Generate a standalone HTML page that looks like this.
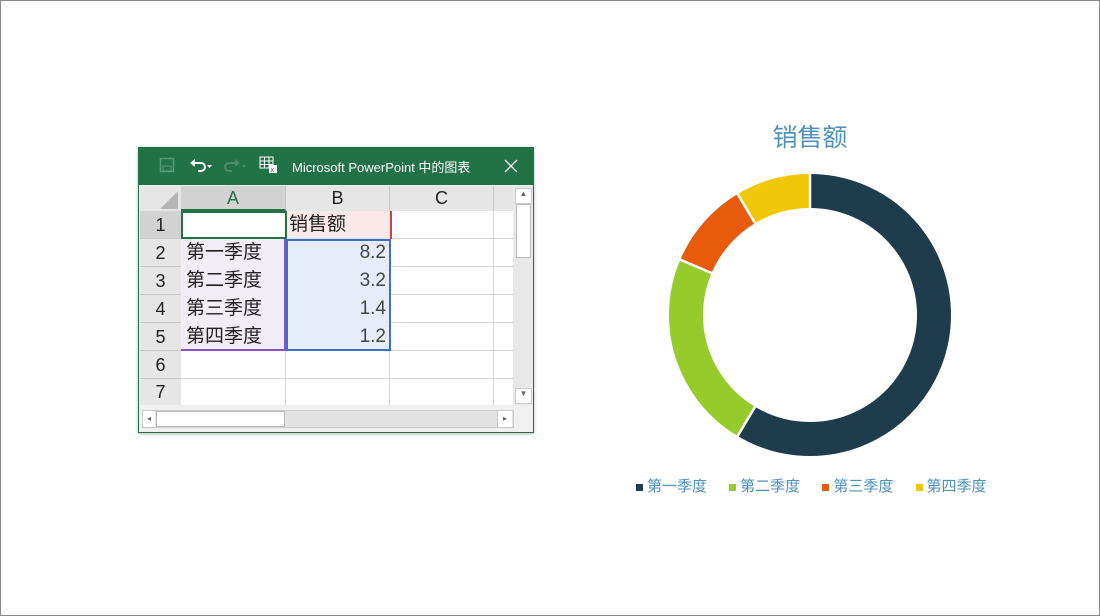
<!DOCTYPE html>
<html><head><meta charset="utf-8"><style>
body{margin:0;width:1100px;height:616px;background:#fff;position:relative;overflow:hidden;font-family:"Liberation Sans","Noto Sans CJK SC",sans-serif}
.frame{position:absolute;left:0;top:0;width:1098px;height:614px;border:1px solid #888}
.win{position:absolute;left:138px;top:147px;width:394px;height:284px;border:1px solid #217346;background:#f0f0f0;box-shadow:0 1px 3px rgba(0,0,0,.3)}
.tb{position:absolute;left:0;top:0;width:394px;height:37px;background:#217346;color:#fff}
.a{position:absolute}
.c{position:absolute;box-sizing:border-box;font-size:19px;color:#222;line-height:27px;white-space:nowrap}
.hd{background:#e6e6e6;text-align:center;color:#222;font-size:18px}
</style></head><body>
<div class="frame"></div>
<div class="win">
 <div class="tb">
  <svg class="a" style="left:20px;top:9px" width="16" height="16"><rect x="1.5" y="1.5" width="13" height="13" fill="none" stroke="#5a9a76" stroke-width="1.5"/><rect x="4" y="9" width="8" height="5" fill="none" stroke="#5a9a76"/></svg>
  <svg class="a" style="left:50px;top:8px" width="24" height="18"><path d="M4 7h8a4 4 0 0 1 0 8h-3" fill="none" stroke="#fff" stroke-width="2"/><path d="M1 7l5-4v8z" fill="#fff"/><path d="M18 9h5l-2.5 3z" fill="#fff"/></svg>
  <svg class="a" style="left:84px;top:8px" width="24" height="18"><path d="M14 7H6a4 4 0 0 0 0 8h3" fill="none" stroke="#4d8c69" stroke-width="2"/><path d="M17 7l-5-4v8z" fill="#4d8c69"/><path d="M19 9h4l-2 3z" fill="#4d8c69"/></svg>
  <svg class="a" style="left:120px;top:7px" width="20" height="20"><rect x="1" y="2" width="13" height="11" fill="none" stroke="#fff"/><path d="M1 6h13M1 9.5h13M5.5 2v11M10 2v11" stroke="#fff"/><rect x="10" y="10" width="8" height="8" fill="#fff"/><text x="11.5" y="17" font-size="7" fill="#217346">x</text></svg>
  <div class="a" style="left:153px;top:9px;font-size:13px;">Microsoft PowerPoint 中的图表</div>
  <svg class="a" style="left:365px;top:11px" width="14" height="14"><path d="M1 1L13 13M13 1L1 13" stroke="#fff" stroke-width="1.3"/></svg>
 </div>
 <div class="c hd" style="left:1px;top:38px;width:41px;height:25px;background:#e6e6e6"></div>
 <svg class="a" style="left:20px;top:42px" width="20" height="20"><path d="M19 1V19H1z" fill="#b5b5b5"/></svg>
 <div class="c hd" style="left:42px;top:38px;width:105px;height:25px;line-height:25px;background:#d2d2d2;color:#217346;border-bottom:2px solid #217346;border-right:1px solid #c8c8c8">A</div>
 <div class="c hd" style="left:147px;top:38px;width:104px;height:25px;line-height:25px;border-right:1px solid #c8c8c8">B</div>
 <div class="c hd" style="left:251px;top:38px;width:104px;height:25px;line-height:25px;border-right:1px solid #c8c8c8">C</div>
 <div class="c hd" style="left:355px;top:38px;width:19px;height:25px"></div>
 <div class="c hd" style="left:1px;top:63px;width:41px;height:28px;line-height:28px;background:#d2d2d2;border-bottom:1px solid #c8c8c8">1</div>
 <div class="c hd" style="left:1px;top:91px;width:41px;height:28px;line-height:28px;border-bottom:1px solid #c8c8c8">2</div>
 <div class="c hd" style="left:1px;top:119px;width:41px;height:28px;line-height:28px;border-bottom:1px solid #c8c8c8">3</div>
 <div class="c hd" style="left:1px;top:147px;width:41px;height:28px;line-height:28px;border-bottom:1px solid #c8c8c8">4</div>
 <div class="c hd" style="left:1px;top:175px;width:41px;height:28px;line-height:28px;border-bottom:1px solid #c8c8c8">5</div>
 <div class="c hd" style="left:1px;top:203px;width:41px;height:28px;line-height:28px;border-bottom:1px solid #c8c8c8">6</div>
 <div class="c hd" style="left:1px;top:231px;width:41px;height:26px;line-height:26px">7</div>
 <div class="a" style="left:42px;top:63px;width:332px;height:194px;background:#fff;
  background-image:linear-gradient(#d4d4d4,#d4d4d4),linear-gradient(#d4d4d4,#d4d4d4),linear-gradient(#d4d4d4,#d4d4d4);
  background-size:1px 100%,1px 100%,1px 100%;background-position:104px 0,208px 0,312px 0;background-repeat:no-repeat"></div>
 <div class="a" style="left:42px;top:63px;width:332px;height:194px;background:repeating-linear-gradient(to bottom,transparent 0 27px,#d4d4d4 27px 28px)"></div>
 <div class="a" style="left:147px;top:63px;width:104px;height:28px;background:#fbe9e9;border-right:2px solid #d04040"></div>
 <div class="a" style="left:42px;top:91px;width:105px;height:112px;background:#f1ecf5;border-bottom:2px solid #8a52c0;border-right:2px solid #8a52c0;box-sizing:border-box"></div>
 <div class="a" style="left:147px;top:91px;width:105px;height:112px;background:#e7edf8;border:2px solid #3b70c8;box-sizing:border-box"></div>
 <div class="a" style="left:42px;top:63px;width:106px;height:28px;border:2px solid #217346;box-sizing:border-box;background:#fff"></div>
 <div class="c" style="left:150px;top:63px">销售额</div>
 <div class="c" style="left:47px;top:91px">第一季度</div>
 <div class="c" style="left:47px;top:119px">第二季度</div>
 <div class="c" style="left:47px;top:147px">第三季度</div>
 <div class="c" style="left:47px;top:175px">第四季度</div>
 <div class="c" style="left:150px;top:91px;width:97px;text-align:right;color:#444">8.2</div>
 <div class="c" style="left:150px;top:119px;width:97px;text-align:right;color:#444">3.2</div>
 <div class="c" style="left:150px;top:147px;width:97px;text-align:right;color:#444">1.4</div>
 <div class="c" style="left:150px;top:175px;width:97px;text-align:right;color:#444">1.2</div>
 <div class="a" style="left:374px;top:38px;width:20px;height:219px;background:#e8e8e8"></div>
 <div class="a" style="left:376px;top:40px;width:15px;height:14px;background:#fff;border:1px solid #ccc;font-size:8px;text-align:center;color:#666">▲</div>
 <div class="a" style="left:377px;top:56px;width:13px;height:52px;background:#fff;border:1px solid #bbb"></div>
 <div class="a" style="left:376px;top:240px;width:15px;height:14px;background:#fff;border:1px solid #ccc;font-size:8px;text-align:center;color:#666">▼</div>
 <div class="a" style="left:0;top:258px;width:394px;height:26px;background:#f0f0f0"></div>
 <div class="a" style="left:3px;top:262px;width:370px;height:16px;background:#e2e2e2;border:1px solid #ccc"></div>
 <div class="a" style="left:4px;top:263px;width:12px;height:16px;background:#fff;font-size:8px;color:#666;line-height:16px;text-align:center">◂</div>
 <div class="a" style="left:17px;top:263px;width:127px;height:14px;background:#fff;border:1px solid #bbb"></div>
 <div class="a" style="left:358px;top:263px;width:14px;height:16px;background:#fff;border-left:1px solid #ccc;font-size:8px;color:#666;line-height:16px;text-align:center">▸</div>
</div>

<div class="a" style="left:700px;top:118px;width:220px;text-align:center;font-size:25px;color:#4f92b8">销售额</div>
<svg class="a" style="left:0;top:0" width="1100" height="616">
 <g transform="rotate(-90 810 315)" fill="none" stroke-width="34">
  <circle cx="810" cy="315" r="124" stroke="#1f3c4c" stroke-dasharray="456.4 1000"/>
  <circle cx="810" cy="315" r="124" stroke="#96cb2b" stroke-dasharray="0 456.4 178.1 1000"/>
  <circle cx="810" cy="315" r="124" stroke="#e85a0c" stroke-dasharray="0 634.5 77.9 1000"/>
  <circle cx="810" cy="315" r="124" stroke="#f0c808" stroke-dasharray="0 712.4 67 1000"/>
 </g>
 <g stroke="#fff" stroke-width="2.5">
  <line x1="810" y1="212" x2="810" y2="170"/>
  <line x1="756.1" y1="405.1" x2="736.6" y2="437.7"/>
  <line x1="713.4" y1="273.8" x2="678.5" y2="258.9"/>
  <line x1="756.1" y1="224.9" x2="736.6" y2="192.3"/>
 </g>
</svg>
<div class="a" style="left:636px;top:475px;font-size:15px;color:#4f92b8;white-space:nowrap">
 <span style="display:inline-block;width:7px;height:7px;background:#1f3c4c;margin-right:4px"></span>第一季度
 <span style="display:inline-block;width:7px;height:7px;background:#96cb2b;margin:0 4px 0 18px"></span>第二季度
 <span style="display:inline-block;width:7px;height:7px;background:#e85a0c;margin:0 4px 0 18px"></span>第三季度
 <span style="display:inline-block;width:7px;height:7px;background:#f0c808;margin:0 4px 0 18px"></span>第四季度
</div>
</body></html>
